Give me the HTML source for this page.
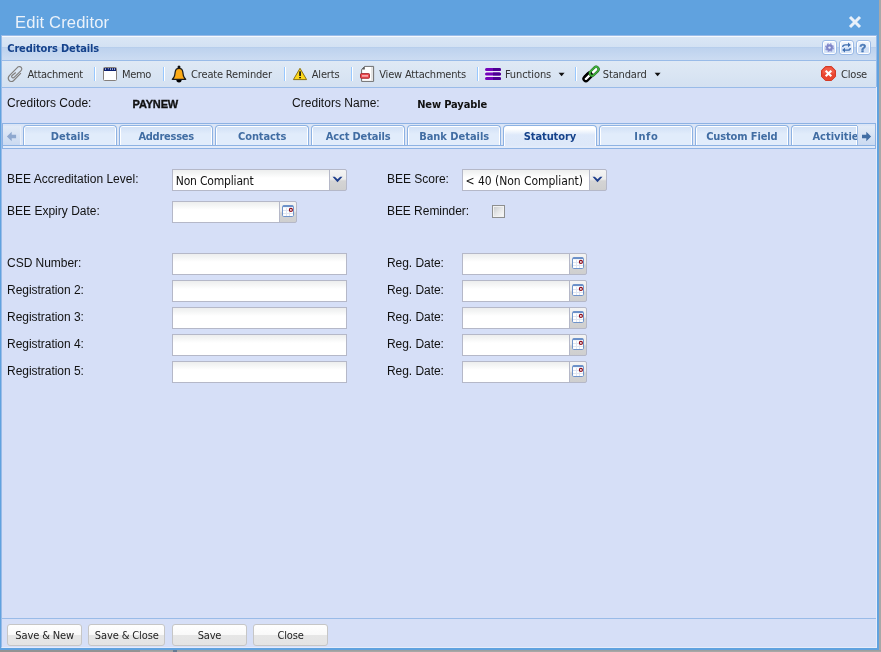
<!DOCTYPE html>
<html><head><meta charset="utf-8"><title>Edit Creditor</title>
<style>
*{box-sizing:border-box;margin:0;padding:0}
html,body{width:881px;height:652px;overflow:hidden;background:#adadad}
body{position:relative;font-family:"DejaVu Sans Condensed","Liberation Sans",sans-serif;font-size:11px;color:#222}
div,span,svg{position:absolute}
.tx{white-space:nowrap;display:block}
#win{left:0;top:0;width:879px;height:650px;background:#60a2df}
#panel{left:1px;top:35px;width:876px;height:613px;background:#d6dff7;border:1px solid #99bbe8;border-right-color:#e6ecfb;border-bottom-color:#e6ecfb}
#phead{left:1px;top:35px;width:876px;height:26px;border:1px solid #99bbe8;background:linear-gradient(#f6f9fd 0,#f6f9fd 1px,#dae6f5 1px,#d3e1f3 11px,#b7ceec 11px,#b7ceec 12px,#bdd2ee 12px,#ccdcf2 24px)}
.tool{top:40px;width:15px;height:15px;border:1px solid #9bbae6;border-radius:3px;background:linear-gradient(#f0f5fd 0,#e6eefb 45%,#cfdff6 52%,#d6e4f8 100%);box-shadow:inset 0 0 0 1px #fff;overflow:hidden}
#tbar{left:2px;top:61px;width:875px;height:26px;border-right:1px solid #99bbe8;background:linear-gradient(#dfe9f5 0,#d4e1f1 100%)}
#tbarb{left:2px;top:87px;width:874px;height:1px;background:#99bbe8}
.sep{top:67px;width:2px;height:14px;border-left:1px solid #98c8ff;border-right:1px solid #fff}
#tabs{left:2px;top:123px;width:874px;height:26px;border:1px solid #8db2e3;background:#dbe5f6}
#tabline{left:2px;top:145px;width:874px;height:1px;background:#8db2e3}
#tabsp{left:3px;top:146px;width:872px;height:2px;background:#e2ebfa}
.tab{top:125px;width:94px;height:20px;border:1px solid #8db2e3;border-bottom:0;border-radius:4px 4px 0 0;background:linear-gradient(#fff 0,#fff 1px,#d2e1f6 1px,#e1ecfb 8px,#e1ecfb 100%);box-shadow:inset 1px 0 0 #fff,inset -1px 0 0 #fff}
.tab.act{height:21px;background:linear-gradient(#fff 0,#fff 3px,#dee9fa 9px,#dde8f9 100%)}
.scr{top:126px;height:19px;width:17px;background:linear-gradient(#e3ebf7 0,#d6e2f4 50%,#cbdaf1 100%)}
#tabclip{left:791px;top:125px;width:66px;height:20px;overflow:hidden}
.inp{height:22px;border:1px solid #b5b8c8;background:linear-gradient(#edeeee 0,#f3f4f4 3px,#fff 8px)}
.trg{width:18px;height:22px;border:1px solid #b5b8c8;border-radius:0 2px 2px 0;background:linear-gradient(#f4f4f4 0,#ececec 45%,#d4d4d4 55%,#cfcfcf 100%)}
#foot{left:2px;top:618px;width:874px;height:1px;background:#99bbe8}
.btn{top:624px;height:22px;border:1px solid #c6c6c6;border-radius:3px;background:linear-gradient(#fefefe 0,#f9f9f9 48%,#e6e6e6 52%,#e4e4e4 100%)}
#chk{left:492px;top:205px;width:13px;height:13px;border:1px solid #8e8f8f;background:linear-gradient(135deg,#c6c8ca 0,#e6e7e8 50%,#fbfbfb 100%);box-shadow:inset 0 0 0 1px #f2f2f2}
#texts{left:0;top:0;width:881px;height:652px;will-change:transform}

</style></head><body>
<div class="gstrip" style="left:0;top:650px;width:881px;height:2px;background:linear-gradient(#9b9b9b,#ababab)"></div><div class="gstrip" style="left:0;top:650px;width:140px;height:2px;background:#939393"></div><div class="gstrip" style="left:173px;top:650px;width:4px;height:2px;background:#667b93"></div><div class="gstrip" style="left:879px;top:0;width:2px;height:650px;background:#a8a8a8"></div>
<div id="win"></div>
<div id="panel"></div><div id="phead"></div>
<div class="tool" style="left:822px"></div>
<div class="tool" style="left:839px"></div>
<div class="tool" style="left:856px"></div>
<div id="tbar"></div><div id="tbarb"></div>
<div class="sep" style="left:94px"></div>
<div class="sep" style="left:163px"></div>
<div class="sep" style="left:284px"></div>
<div class="sep" style="left:351px"></div>
<div class="sep" style="left:477px"></div>
<div class="sep" style="left:575px"></div>
<div id="tabs"></div><div id="tabline"></div><div id="tabsp"></div>
<div class="tab" style="left:23px"></div>
<div class="tab" style="left:119px"></div>
<div class="tab" style="left:215px"></div>
<div class="tab" style="left:311px"></div>
<div class="tab" style="left:407px"></div>
<div class="tab act" style="left:503px"></div>
<div class="tab" style="left:599px"></div>
<div class="tab" style="left:695px"></div>
<div class="tab" style="left:791px;width:66px;border-right:0;border-radius:4px 0 0 0"></div>
<div class="scr" style="left:3px;width:18px;border-right:1px solid #e8eff9"></div>
<div class="scr" style="left:857px;width:18px;border-left:1px solid #9dbce6"></div>
<div class="inp" style="left:172px;top:169px;width:158px"></div>
<div class="trg" style="left:329px;top:169px"></div>
<svg style="left:332px;top:176px" width="11" height="7" viewBox="0 0 11 7"><path d="M0.5 0.8 L2.8 0.8 L5.5 3.3 L8.2 0.8 L10.5 0.8 L5.5 6.2 Z" fill="#1f3f8c"/></svg>
<div class="inp" style="left:462px;top:169px;width:128px"></div>
<div class="trg" style="left:589px;top:169px"></div>
<svg style="left:592px;top:176px" width="11" height="7" viewBox="0 0 11 7"><path d="M0.5 0.8 L2.8 0.8 L5.5 3.3 L8.2 0.8 L10.5 0.8 L5.5 6.2 Z" fill="#1f3f8c"/></svg>
<div class="inp" style="left:172px;top:201px;width:108px"></div>
<div class="trg" style="left:279px;top:201px"></div>
<svg style="left:281px;top:205px" width="14" height="12" viewBox="0 0 14 12"><rect x="1.5" y="0.5" width="11" height="11" rx="1.2" fill="#fff" stroke="#7094ca"/><rect x="2" y="0.5" width="10" height="1.6" fill="#6a8fc8"/><path d="M2 5.5H12M2 8.5H12M5.5 3V11M8.5 3V11" stroke="#dfe6f2" stroke-width="1" fill="none"/><circle cx="9.9" cy="4.9" r="1.5" fill="#fff" stroke="#8f0d1b" stroke-width="1.2"/></svg>
<div id="chk"></div>
<div class="inp" style="left:172px;top:253px;width:175px"></div>
<div class="inp" style="left:462px;top:253px;width:108px"></div>
<div class="trg" style="left:569px;top:253px"></div>
<svg style="left:571px;top:257px" width="14" height="12" viewBox="0 0 14 12"><rect x="1.5" y="0.5" width="11" height="11" rx="1.2" fill="#fff" stroke="#7094ca"/><rect x="2" y="0.5" width="10" height="1.6" fill="#6a8fc8"/><path d="M2 5.5H12M2 8.5H12M5.5 3V11M8.5 3V11" stroke="#dfe6f2" stroke-width="1" fill="none"/><circle cx="9.9" cy="4.9" r="1.5" fill="#fff" stroke="#8f0d1b" stroke-width="1.2"/></svg>
<div class="inp" style="left:172px;top:280px;width:175px"></div>
<div class="inp" style="left:462px;top:280px;width:108px"></div>
<div class="trg" style="left:569px;top:280px"></div>
<svg style="left:571px;top:284px" width="14" height="12" viewBox="0 0 14 12"><rect x="1.5" y="0.5" width="11" height="11" rx="1.2" fill="#fff" stroke="#7094ca"/><rect x="2" y="0.5" width="10" height="1.6" fill="#6a8fc8"/><path d="M2 5.5H12M2 8.5H12M5.5 3V11M8.5 3V11" stroke="#dfe6f2" stroke-width="1" fill="none"/><circle cx="9.9" cy="4.9" r="1.5" fill="#fff" stroke="#8f0d1b" stroke-width="1.2"/></svg>
<div class="inp" style="left:172px;top:307px;width:175px"></div>
<div class="inp" style="left:462px;top:307px;width:108px"></div>
<div class="trg" style="left:569px;top:307px"></div>
<svg style="left:571px;top:311px" width="14" height="12" viewBox="0 0 14 12"><rect x="1.5" y="0.5" width="11" height="11" rx="1.2" fill="#fff" stroke="#7094ca"/><rect x="2" y="0.5" width="10" height="1.6" fill="#6a8fc8"/><path d="M2 5.5H12M2 8.5H12M5.5 3V11M8.5 3V11" stroke="#dfe6f2" stroke-width="1" fill="none"/><circle cx="9.9" cy="4.9" r="1.5" fill="#fff" stroke="#8f0d1b" stroke-width="1.2"/></svg>
<div class="inp" style="left:172px;top:334px;width:175px"></div>
<div class="inp" style="left:462px;top:334px;width:108px"></div>
<div class="trg" style="left:569px;top:334px"></div>
<svg style="left:571px;top:338px" width="14" height="12" viewBox="0 0 14 12"><rect x="1.5" y="0.5" width="11" height="11" rx="1.2" fill="#fff" stroke="#7094ca"/><rect x="2" y="0.5" width="10" height="1.6" fill="#6a8fc8"/><path d="M2 5.5H12M2 8.5H12M5.5 3V11M8.5 3V11" stroke="#dfe6f2" stroke-width="1" fill="none"/><circle cx="9.9" cy="4.9" r="1.5" fill="#fff" stroke="#8f0d1b" stroke-width="1.2"/></svg>
<div class="inp" style="left:172px;top:361px;width:175px"></div>
<div class="inp" style="left:462px;top:361px;width:108px"></div>
<div class="trg" style="left:569px;top:361px"></div>
<svg style="left:571px;top:365px" width="14" height="12" viewBox="0 0 14 12"><rect x="1.5" y="0.5" width="11" height="11" rx="1.2" fill="#fff" stroke="#7094ca"/><rect x="2" y="0.5" width="10" height="1.6" fill="#6a8fc8"/><path d="M2 5.5H12M2 8.5H12M5.5 3V11M8.5 3V11" stroke="#dfe6f2" stroke-width="1" fill="none"/><circle cx="9.9" cy="4.9" r="1.5" fill="#fff" stroke="#8f0d1b" stroke-width="1.2"/></svg>
<div id="foot"></div>
<div class="btn" style="left:7px;width:75px"></div>
<div class="btn" style="left:88px;width:77px"></div>
<div class="btn" style="left:172px;width:75px"></div>
<div class="btn" style="left:253px;width:75px"></div>
<svg style="left:847px;top:14px" width="16" height="16" viewBox="0 0 16 16" ><path d="M3 3 L13 13 M13 3 L3 13" stroke="#e9f1fa" stroke-width="3" fill="none"/></svg>
<svg style="left:4px;top:62px" width="24" height="24" viewBox="0 0 24 24" ><path transform="translate(0.9 1) scale(0.93)" d="M16.9 11.2 L9.2 19.1 C7.8 20.4 5.6 20.2 4.4 18.6 C3.3 17.1 3.5 15.0 4.8 13.6 L13.6 4.6 C14.8 3.5 16.6 3.6 17.6 4.8 C18.5 5.9 18.4 7.3 17.4 8.3 L9.9 15.5 C9.2 16.2 8.2 16.1 7.6 15.4 C7.1 14.8 7.1 14.0 7.7 13.4 L11.4 10.5" stroke="#7f7d7b" stroke-width="1.2" fill="none" stroke-linecap="round"/></svg>
<svg style="left:102px;top:66px" width="16" height="16" viewBox="0 0 16 16" ><rect x="1.5" y="1.5" width="13" height="13" rx="1" fill="#fff" stroke="#857f7b"/><rect x="2" y="2" width="12" height="3" fill="#0b1f6e"/><path d="M3.5 2.2V4M5.8 2.8H7M8.5 2.2V4M10.5 2.2V4M12.5 2.2V4" stroke="#c9d2ea" stroke-width="0.8" fill="none"/></svg>
<svg style="left:167px;top:62px" width="24" height="24" viewBox="0 0 24 24" ><circle cx="12" cy="5" r="1.5" fill="#111"/><path d="M9.3 17.6 A2.7 2.9 0 0 0 14.7 17.6 Z" fill="#000"/><path d="M12 6.3 C9.6 6.3 8.4 8 8.2 10 C8 12 7.8 14 6.8 15.5 L5.3 17.3 L18.7 17.3 L17.2 15.5 C16.2 14 16 12 15.8 10 C15.6 8 14.4 6.3 12 6.3 Z" fill="#fcab17" stroke="#1c1c1c" stroke-width="1.3" stroke-linejoin="round"/></svg>
<svg style="left:288px;top:62px" width="24" height="24" viewBox="0 0 24 24" ><path d="M12 6.3 L18.6 17.6 L5.4 17.6 Z" fill="#fdd81a" stroke="#8b7213" stroke-width="1" stroke-linejoin="round"/><rect x="11.2" y="9.3" width="1.7" height="4.7" rx="0.5" fill="#111"/><rect x="11.1" y="15" width="1.9" height="1.3" rx="0.4" fill="#111"/></svg>
<svg style="left:355px;top:62px" width="24" height="24" viewBox="0 0 24 24" ><path d="M9.6 4.4 L18.6 4.4 L18.6 19.4 L6.6 19.4 L6.6 7.4 Z" fill="#fff" stroke="#6e6e6e" stroke-width="1" stroke-linejoin="round"/><rect x="16" y="5" width="2" height="14" fill="#e4e4e4"/><path d="M6.8 7.4 L9.8 7.4 L9.8 4.6 Z" fill="#555"/><rect x="5.5" y="11.6" width="9" height="4.7" rx="0.8" fill="#ee4a4f" stroke="#a3232a" stroke-width="0.9"/><path d="M7 13.9 H13" stroke="#fbd5d6" stroke-width="1.2"/></svg>
<svg style="left:481px;top:62px" width="24" height="24" viewBox="0 0 24 24" ><rect x="4" y="9" width="16" height="1.5" fill="#f1eefa"/><rect x="4" y="13.5" width="16" height="1.5" fill="#f1eefa"/><rect x="4" y="6" width="16" height="3" rx="1.5" fill="#7403b9"/><path d="M12 6 H18.5 A1.5 1.5 0 0 1 18.5 9 H12 Z" fill="#4c0091"/><rect x="4" y="10.5" width="16" height="3" rx="1.5" fill="#7403b9"/><path d="M12 10.5 H18.5 A1.5 1.5 0 0 1 18.5 13.5 H12 Z" fill="#4c0091"/><rect x="4" y="15" width="16" height="3" rx="1.5" fill="#7403b9"/><path d="M12 15 H18.5 A1.5 1.5 0 0 1 18.5 18 H12 Z" fill="#4c0091"/></svg>
<svg style="left:579px;top:62px" width="24" height="24" viewBox="0 0 24 24" ><g transform="rotate(-45 8.9 14.8)"><rect x="3.7" y="12.4" width="10.4" height="4.8" rx="2.4" fill="#fff" stroke="#000" stroke-width="2.3"/></g><g transform="rotate(-45 15.1 9.3)"><rect x="9.9" y="6.9" width="10.4" height="4.8" rx="2.4" fill="none" stroke="#245c20" stroke-width="2.5"/><rect x="9.9" y="6.9" width="10.4" height="4.8" rx="2.4" fill="none" stroke="#3fae3a" stroke-width="1.7"/><rect x="12.5" y="8.2" width="6.6" height="2.2" rx="1.1" fill="#fff"/></g><g transform="rotate(-45 8.9 14.8)"><path d="M11.7 12.4 L6.1 12.4" stroke="#000" stroke-width="2.3" fill="none"/></g></svg>
<svg style="left:558px;top:72px" width="8" height="5" viewBox="0 0 8 5" ><path d="M0.6 0.8 L6.6 0.8 L3.6 4.2 Z" fill="#111"/></svg>
<svg style="left:654px;top:72px" width="8" height="5" viewBox="0 0 8 5" ><path d="M0.6 0.8 L6.6 0.8 L3.6 4.2 Z" fill="#111"/></svg>
<svg style="left:820px;top:65px" width="17" height="17" viewBox="0 0 17 17" ><path d="M5.4 1.5 L11.6 1.5 L15.5 5.4 L15.5 11.6 L11.6 15.5 L5.4 15.5 L1.5 11.6 L1.5 5.4 Z" fill="#e9452f" stroke="#d23a26" stroke-width="1" stroke-linejoin="round"/><path d="M5.8 2.6 L11.2 2.6 L14.4 5.8 L14.4 8.5 L2.6 8.5 L2.6 5.8 Z" fill="#f2604c" opacity="0.8"/><path d="M5.7 5.7 L11.3 11.3 M11.3 5.7 L5.7 11.3" stroke="#fff" stroke-width="2.1" fill="none"/></svg>
<svg style="left:822px;top:40px" width="15" height="15" viewBox="0 0 15 15" ><circle cx="7.5" cy="7.6" r="3.8" fill="none" stroke="#8a8fce" stroke-width="1.3" stroke-dasharray="1.7 1.285"/><circle cx="7.5" cy="7.6" r="3.4" fill="#8086c9"/><circle cx="7.5" cy="7.6" r="1.2" fill="#e6ebf9"/></svg>
<svg style="left:839px;top:40px" width="15" height="15" viewBox="0 0 15 15" ><path d="M3.7 7.1 C3.7 5.4 4.8 4.9 6.4 4.9 H9.3 M11.3 7.9 C11.3 9.6 10.2 10.1 8.6 10.1 H5.7" stroke="#3f6eaf" stroke-width="1.3" fill="none"/><path d="M9 2.6 L11.9 4.9 L9 7.2 Z M6 7.8 L3.1 10.1 L6 12.4 Z" fill="#3f6eaf"/></svg>
<svg style="left:6px;top:131px" width="12" height="11" viewBox="0 0 12 11" ><path d="M0.9 5.5 L5.7 0.8 L5.7 3.8 L10.1 3.8 L10.1 7.2 L5.7 7.2 L5.7 10.2 Z" fill="#8ea8cf"/></svg>
<svg style="left:861px;top:131px" width="12" height="11" viewBox="0 0 12 11" ><path d="M10.1 5.5 L5.3 0.8 L5.3 3.8 L1 3.8 L1 7.2 L5.3 7.2 L5.3 10.2 Z" fill="#416da3"/></svg>
<div id="texts">
<span class="tx" id="t_title" style="left:15.07px;top:12.93px;font:normal 16.60px/20px 'Liberation Sans',sans-serif;color:#ebf2fa;letter-spacing:0.146px">Edit Creditor</span>
<span class="tx" id="t_head" style="left:7.25px;top:40.55px;font:bold 11.00px/15px 'DejaVu Sans Condensed','Liberation Sans',sans-serif;color:#15428b;letter-spacing:-0.135px">Creditors Details</span>
<span class="tx" id="t_att" style="left:27.48px;top:66.55px;font:normal 11.00px/15px 'DejaVu Sans Condensed','Liberation Sans',sans-serif;color:#333;letter-spacing:-0.263px">Attachment</span>
<span class="tx" id="t_memo" style="left:122.08px;top:66.55px;font:normal 11.00px/15px 'DejaVu Sans Condensed','Liberation Sans',sans-serif;color:#333;letter-spacing:-0.353px">Memo</span>
<span class="tx" id="t_rem" style="left:191.11px;top:66.55px;font:normal 11.00px/15px 'DejaVu Sans Condensed','Liberation Sans',sans-serif;color:#333;letter-spacing:-0.187px">Create Reminder</span>
<span class="tx" id="t_alert" style="left:311.73px;top:66.55px;font:normal 11.00px/15px 'DejaVu Sans Condensed','Liberation Sans',sans-serif;color:#333;letter-spacing:-0.173px">Alerts</span>
<span class="tx" id="t_view" style="left:379.23px;top:66.55px;font:normal 11.00px/15px 'DejaVu Sans Condensed','Liberation Sans',sans-serif;color:#333;letter-spacing:-0.184px">View Attachments</span>
<span class="tx" id="t_func" style="left:504.89px;top:66.55px;font:normal 11.00px/15px 'DejaVu Sans Condensed','Liberation Sans',sans-serif;color:#333;letter-spacing:-0.099px">Functions</span>
<span class="tx" id="t_std" style="left:602.74px;top:66.55px;font:normal 11.00px/15px 'DejaVu Sans Condensed','Liberation Sans',sans-serif;color:#333;letter-spacing:-0.129px">Standard</span>
<span class="tx" id="t_close" style="left:841.11px;top:66.55px;font:normal 11.00px/15px 'DejaVu Sans Condensed','Liberation Sans',sans-serif;color:#333;letter-spacing:-0.226px">Close</span>
<span class="tx" id="t_cc" style="left:7.11px;top:94.60px;font:normal 12.00px/16px 'Liberation Sans',sans-serif;color:#111;letter-spacing:0.019px">Creditors Code:</span>
<span class="tx" id="t_ccv" style="left:132.56px;top:96.55px;font:bold 11.00px/15px 'Liberation Sans',sans-serif;color:#111;letter-spacing:-0.156px;-webkit-text-stroke:0.35px #111">PAYNEW</span>
<span class="tx" id="t_cn" style="left:292.11px;top:94.60px;font:normal 12.00px/16px 'Liberation Sans',sans-serif;color:#111;letter-spacing:0.017px">Creditors Name:</span>
<span class="tx" id="t_cnv" style="left:417.14px;top:96.55px;font:bold 11.00px/15px 'DejaVu Sans Condensed','Liberation Sans',sans-serif;color:#111;letter-spacing:-0.108px">New Payable</span>
<span class="tx" id="t_tab0" style="left:50.85px;top:128.55px;font:bold 11.00px/15px 'DejaVu Sans Condensed','Liberation Sans',sans-serif;color:#416da3;letter-spacing:-0.022px">Details</span>
<span class="tx" id="t_tab1" style="left:138.39px;top:128.55px;font:bold 11.00px/15px 'DejaVu Sans Condensed','Liberation Sans',sans-serif;color:#416da3;letter-spacing:-0.253px">Addresses</span>
<span class="tx" id="t_tab2" style="left:238.04px;top:128.55px;font:bold 11.00px/15px 'DejaVu Sans Condensed','Liberation Sans',sans-serif;color:#416da3;letter-spacing:-0.091px">Contacts</span>
<span class="tx" id="t_tab3" style="left:325.71px;top:128.55px;font:bold 11.00px/15px 'DejaVu Sans Condensed','Liberation Sans',sans-serif;color:#416da3;letter-spacing:-0.152px">Acct Details</span>
<span class="tx" id="t_tab4" style="left:419.15px;top:128.55px;font:bold 11.00px/15px 'DejaVu Sans Condensed','Liberation Sans',sans-serif;color:#416da3;letter-spacing:-0.022px">Bank Details</span>
<span class="tx" id="t_tab5" style="left:523.75px;top:128.55px;font:bold 11.00px/15px 'DejaVu Sans Condensed','Liberation Sans',sans-serif;color:#15428b;letter-spacing:-0.093px">Statutory</span>
<span class="tx" id="t_tab6" style="left:634.15px;top:128.55px;font:bold 11.00px/15px 'DejaVu Sans Condensed','Liberation Sans',sans-serif;color:#416da3;letter-spacing:0.625px">Info</span>
<span class="tx" id="t_tab7" style="left:706.17px;top:128.55px;font:bold 11.00px/15px 'DejaVu Sans Condensed','Liberation Sans',sans-serif;color:#416da3;letter-spacing:-0.118px">Custom Field</span>
<span class="tx" id="t_l1" style="left:7.09px;top:170.60px;font:normal 12.00px/16px 'Liberation Sans',sans-serif;color:#111;letter-spacing:-0.001px">BEE Accreditation Level:</span>
<span class="tx" id="t_l2" style="left:7.09px;top:202.60px;font:normal 12.00px/16px 'Liberation Sans',sans-serif;color:#111;letter-spacing:0.003px">BEE Expiry Date:</span>
<span class="tx" id="t_l3" style="left:7.07px;top:254.60px;font:normal 12.00px/16px 'Liberation Sans',sans-serif;color:#111;letter-spacing:-0.040px">CSD Number:</span>
<span class="tx" id="t_l4" style="left:7.09px;top:281.60px;font:normal 12.00px/16px 'Liberation Sans',sans-serif;color:#111;letter-spacing:-0.040px">Registration 2:</span>
<span class="tx" id="t_l5" style="left:7.09px;top:308.60px;font:normal 12.00px/16px 'Liberation Sans',sans-serif;color:#111;letter-spacing:-0.040px">Registration 3:</span>
<span class="tx" id="t_l6" style="left:7.09px;top:335.60px;font:normal 12.00px/16px 'Liberation Sans',sans-serif;color:#111;letter-spacing:-0.040px">Registration 4:</span>
<span class="tx" id="t_l7" style="left:7.09px;top:362.60px;font:normal 12.00px/16px 'Liberation Sans',sans-serif;color:#111;letter-spacing:-0.040px">Registration 5:</span>
<span class="tx" id="t_r1" style="left:386.94px;top:170.60px;font:normal 12.00px/16px 'Liberation Sans',sans-serif;color:#111;letter-spacing:-0.010px">BEE Score:</span>
<span class="tx" id="t_r2" style="left:386.94px;top:202.60px;font:normal 12.00px/16px 'Liberation Sans',sans-serif;color:#111;letter-spacing:-0.040px">BEE Reminder:</span>
<span class="tx" id="t_r3" style="left:386.94px;top:254.60px;font:normal 12.00px/16px 'Liberation Sans',sans-serif;color:#111;letter-spacing:-0.040px">Reg. Date:</span>
<span class="tx" id="t_r4" style="left:386.94px;top:281.60px;font:normal 12.00px/16px 'Liberation Sans',sans-serif;color:#111;letter-spacing:-0.040px">Reg. Date:</span>
<span class="tx" id="t_r5" style="left:386.94px;top:308.60px;font:normal 12.00px/16px 'Liberation Sans',sans-serif;color:#111;letter-spacing:-0.040px">Reg. Date:</span>
<span class="tx" id="t_r6" style="left:386.94px;top:335.60px;font:normal 12.00px/16px 'Liberation Sans',sans-serif;color:#111;letter-spacing:-0.040px">Reg. Date:</span>
<span class="tx" id="t_r7" style="left:386.94px;top:362.60px;font:normal 12.00px/16px 'Liberation Sans',sans-serif;color:#111;letter-spacing:-0.040px">Reg. Date:</span>
<span class="tx" id="t_v1" style="left:175.79px;top:172.60px;font:normal 12.00px/16px 'DejaVu Sans Condensed','Liberation Sans',sans-serif;color:#111;letter-spacing:-0.183px">Non Compliant</span>
<span class="tx" id="t_v2" style="left:465.51px;top:172.60px;font:normal 12.00px/16px 'DejaVu Sans Condensed','Liberation Sans',sans-serif;color:#111;letter-spacing:-0.037px">&lt; 40 (Non Compliant)</span>
<span class="tx" id="t_b1" style="left:15.26px;top:627.55px;font:normal 11.00px/15px 'DejaVu Sans Condensed','Liberation Sans',sans-serif;color:#222;letter-spacing:-0.107px">Save &amp; New</span>
<span class="tx" id="t_b2" style="left:94.77px;top:627.55px;font:normal 11.00px/15px 'DejaVu Sans Condensed','Liberation Sans',sans-serif;color:#222;letter-spacing:-0.114px">Save &amp; Close</span>
<span class="tx" id="t_b3" style="left:197.74px;top:627.55px;font:normal 11.00px/15px 'DejaVu Sans Condensed','Liberation Sans',sans-serif;color:#222;letter-spacing:-0.213px">Save</span>
<span class="tx" id="t_b4" style="left:277.39px;top:627.55px;font:normal 11.00px/15px 'DejaVu Sans Condensed','Liberation Sans',sans-serif;color:#222;letter-spacing:-0.154px">Close</span>
<span class="tx" id="t_q" style="left:859.34px;top:40.68px;font:bold 11.50px/15px 'Liberation Sans',sans-serif;color:#4a79b6;letter-spacing:-1.787px;-webkit-text-stroke:0.5px #4a79b6">?</span>
<div id="tabclip"><span class="tx" id="t_tab8" style="left:21.5px;top:3.5500000000000114px;font:bold 11px/15px 'DejaVu Sans Condensed','Liberation Sans',sans-serif;color:#416da3;letter-spacing:-0.036px">Activities</span></div>
</div>
</body></html>
